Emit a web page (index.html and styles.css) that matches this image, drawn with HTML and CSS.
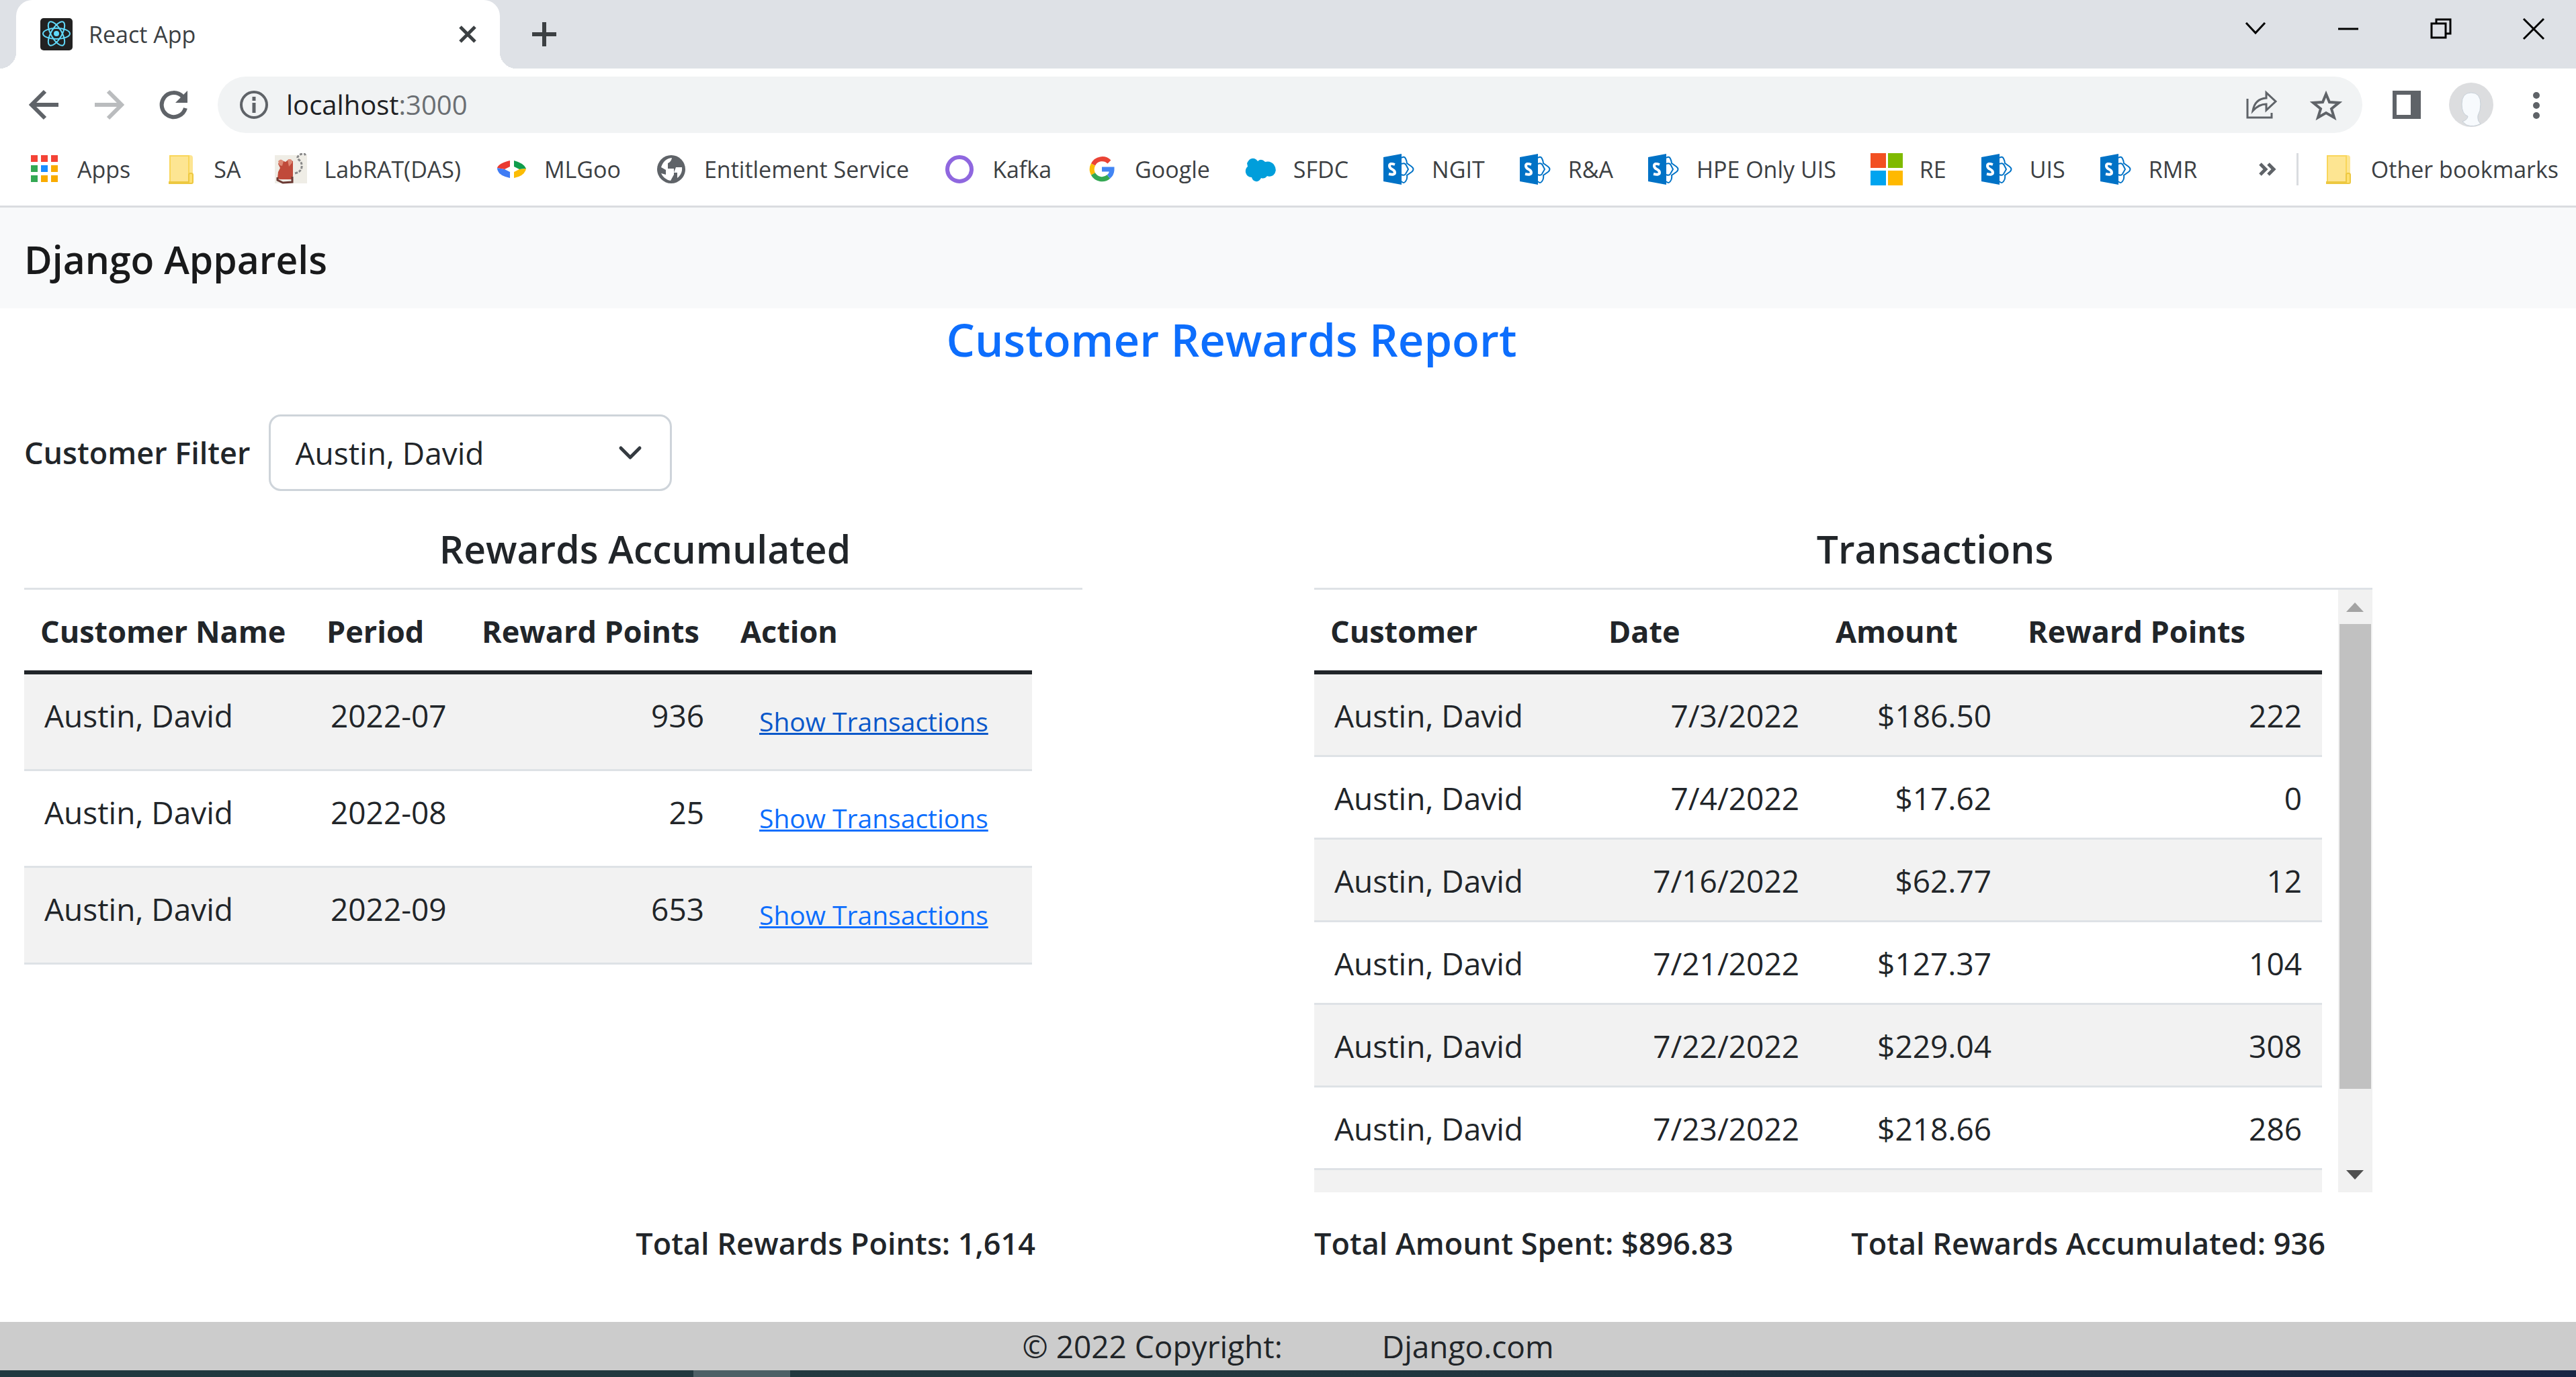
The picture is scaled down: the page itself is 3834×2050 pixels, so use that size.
FILE: index.html
```html
<!DOCTYPE html>
<html lang="en">
<head>
<meta charset="utf-8">
<title>React App</title>
<link rel="stylesheet" href="styles.css">
</head>
<body>
<svg class="defs" aria-hidden="true">
  <symbol id="folder" viewBox="0 0 48 48"><path d="M7 3h31q4 0 4 4v37H7z" fill="#fde592"/><path d="M8 4h28v39H8z" fill="#fde592" stroke="#f9d65a" stroke-width="2"/><path d="M36 43V32q0-2 3-2t3 2v11q0 2-2 2H7v-2z" fill="#ffe072" stroke="#edc840" stroke-width="2"/></symbol>
  <symbol id="sharepoint" viewBox="0 0 48 48"><path d="M28 7q4-3 6 1t2 7l7 5q5 4 0 8l-7 5q1 5-2 9t-6 0" fill="#fff" stroke="#0072c6" stroke-width="2"/><path d="M28 16q5-2 7 2l3 6-4 7q-2 3-6 1" fill="none" stroke="#0072c6" stroke-width="2"/><path d="M1 6l27-5v46L1 42z" fill="#0072c6"/><path d="M18 17q-8-3-8 2 0 3 4 5t4 5q0 4-9 2" fill="none" stroke="#fff" stroke-width="4"/></symbol>
</svg>
<div class="browser">
  <header class="chrome">
    <div class="tabstrip">
      <div class="tab">
        <svg class="icon" viewBox="0 0 48 48"><rect width="48" height="48" rx="5" fill="#222"/><g fill="none" stroke="#61dafb" stroke-width="2"><ellipse cx="24" cy="23" rx="20" ry="8"/><ellipse cx="24" cy="23" rx="20" ry="8" transform="rotate(60 24 23)"/><ellipse cx="24" cy="23" rx="20" ry="8" transform="rotate(120 24 23)"/></g><circle cx="24" cy="23" r="4" fill="#61dafb"/></svg>
        <span class="tab-title">React App</span>
        <button class="plain" aria-label="Close tab"><svg class="icon" viewBox="0 0 48 48"><path d="M13 13l22 22M35 13L13 35" stroke="#3c4043" stroke-width="5"/></svg></button>
      </div>
      <button class="plain newtab" aria-label="New tab"><svg class="icon" viewBox="0 0 48 48"><path d="M24 6v36M6 24h36" stroke="#3c4043" stroke-width="6"/></svg></button>
      <div class="window-buttons">
        <button class="plain" aria-label="Search tabs"><svg class="icon" viewBox="0 0 48 48"><path d="M10 16l14 15 14-15" fill="none" stroke="#000" stroke-width="3"/></svg></button>
        <button class="plain" aria-label="Minimize"><svg class="icon" viewBox="0 0 48 48"><path d="M9 25h30" stroke="#000" stroke-width="3"/></svg></button>
        <button class="plain" aria-label="Restore"><svg class="icon" viewBox="0 0 48 48"><path d="M10 17h21v21H10zM17 17v-6h21v21h-7" fill="none" stroke="#000" stroke-width="3"/></svg></button>
        <button class="plain" aria-label="Close"><svg class="icon" viewBox="0 0 48 48"><path d="M9 10l30 30M39 10L9 40" stroke="#000" stroke-width="3"/></svg></button>
      </div>
    </div>
    <div class="toolbar">
      <button class="plain" aria-label="Back"><svg class="icon" viewBox="0 0 48 48"><path d="M45 24H6M25 4L5 24l20 20" fill="none" stroke="#5f6368" stroke-width="6"/></svg></button>
      <button class="plain" aria-label="Forward"><svg class="icon" viewBox="0 0 48 48"><path d="M3 24h39M23 4l20 20-20 20" fill="none" stroke="#babcbe" stroke-width="6"/></svg></button>
      <button class="plain" aria-label="Reload"><svg class="icon" viewBox="0 0 48 48"><path d="M42 29a18 18 0 1 1-4-17" fill="none" stroke="#5f6368" stroke-width="6"/><path d="M45 3v18H27z" fill="#5f6368"/></svg></button>
      <div class="address">
        <svg class="icon" viewBox="0 0 48 48"><circle cx="24" cy="24" r="19" fill="none" stroke="#5f6368" stroke-width="4"/><path d="M24 21v15M24 12v6" stroke="#5f6368" stroke-width="5"/></svg>
        <span class="url">localhost<span class="port">:3000</span></span>
        <button class="plain" aria-label="Share"><svg class="icon" viewBox="0 0 48 48"><path d="M3 15v28h36v-7" fill="none" stroke="#5f6368" stroke-width="3"/><path d="M11 33q3-18 20-19V6l14 13-14 13v-9q-11 0-20 10z" fill="none" stroke="#5f6368" stroke-width="3"/></svg></button>
        <button class="plain" aria-label="Bookmark this tab"><svg class="icon" viewBox="0 0 48 48"><path d="M24 8l5 12 14 1-11 9 4 13-12-7-12 7 4-13-11-9 14-1z" fill="none" stroke="#5f6368" stroke-width="4"/></svg></button>
      </div>
      <button class="plain" aria-label="Side panel"><svg class="icon" viewBox="0 0 48 48"><path d="M3 3h42v42H3zM9 9v30h21V9z" fill="#5f6368" fill-rule="evenodd"/></svg></button>
      <button class="plain profile" aria-label="Profile"><svg class="avatar" viewBox="0 0 66 66"><circle cx="33" cy="33" r="33" fill="#dcdddf"/><path d="M26 63l-6-5q8-3 8-8-9-3-9-18 0-17 14-17t14 17q0 10-4 17-1 8 4 12-10 6-21 2z" fill="#f7fafd" stroke="#c7d0d8" stroke-width="1"/></svg></button>
      <button class="plain menu" aria-label="Menu"><svg class="icon" viewBox="0 0 48 48"><g fill="#5f6368"><circle cx="24" cy="10" r="5"/><circle cx="24" cy="25" r="5"/><circle cx="24" cy="40" r="5"/></g></svg></button>
    </div>
    <nav class="bookmarks">
      <a href="#"><svg class="icon" viewBox="0 0 48 48"><path d="M4 3h10v10H4zM19 3h10v10H19zM34 3h10v10H34z" fill="#f44336"/><path d="M4 18h10v10H4zM4 33h10v10H4z" fill="#34a853"/><path d="M19 18h10v10H19z" fill="#1a8cff"/><path d="M34 18h10v10H34zM19 33h10v10H19zM34 33h10v10H34z" fill="#f9ab00"/></svg>Apps</a>
      <a href="#"><svg class="icon"><use href="#folder"/></svg>SA</a>
      <a href="#"><svg class="icon" viewBox="0 0 48 48"><path d="M0 3h48v42H0z" fill="#efede6"/><path d="M8 10l8 3 5-4 6 3v22l-2 5H8l-4-1 1-10 3-6-3-6z" fill="#c04a3a"/><path d="M5 12q4-5 8 0l-2 7-4-1zM19 10q7-3 7 4l-5 6z" fill="#dd8a76"/><path d="M4 36v4l8 4 14-1V35" fill="none" stroke="#6b3a34" stroke-width="3"/><path d="M30 30q9-2 10-9t-4-11 2-8 8 3" fill="none" stroke="#888" stroke-width="3" stroke-dasharray="4 2"/></svg>LabRAT(DAS)</a>
      <a href="#"><svg class="icon" viewBox="0 0 48 48"><path d="M22 11v9l-8 4-11-2q2-7 19-11z" fill="#ea3a30"/><path d="M3 22l11 2 8 4v9Q3 33 3 22z" fill="#3f7cf4"/><path d="M28 11v9l8 4 10-1q-3-8-18-12z" fill="#0f9d4c"/><path d="M46 23l-10 1-8 4v9q16-3 18-14z" fill="#fbbc05"/></svg>MLGoo</a>
      <a href="#"><svg class="icon" viewBox="0 0 48 48"><circle cx="24" cy="24" r="21" fill="#5f6368"/><path d="M9 21q4-13 16-14-1 6-6 8v8h9v9l-5 9q-10-2-14-11l7 2v-7zM31 21h9q1 10-7 16v-8h-5z" fill="#fff"/></svg>Entitlement Service</a>
      <a href="#"><svg class="icon" viewBox="0 0 48 48"><circle cx="24" cy="24" r="18" fill="none" stroke="#8f67df" stroke-width="6"/></svg>Kafka</a>
      <a href="#"><svg class="icon" viewBox="0 0 48 48"><g fill="none" stroke-width="7"><path d="M35 13A15 15 0 0 0 11 17" stroke="#ea4335"/><path d="M11 17a15 15 0 0 0 0 14" stroke="#fbbc05"/><path d="M11 31a15 15 0 0 0 23 4" stroke="#34a853"/><path d="M34 35q5-4 5-11H24" stroke="#4285f4"/></g></svg>Google</a>
      <a href="#"><svg class="icon" viewBox="0 0 48 48"><path d="M4 15q4-9 11-7 3 1 5 4 5-5 11 1 8-2 13 4 6 9-1 16-5 3-9 1-4 5-9 3-3 6-8 5-5-1-6-6-7 0-9-7-1-6 3-9z" fill="#009edb"/></svg>SFDC</a>
      <a href="#"><svg class="icon"><use href="#sharepoint"/></svg>NGIT</a>
      <a href="#"><svg class="icon"><use href="#sharepoint"/></svg>R&amp;A</a>
      <a href="#"><svg class="icon"><use href="#sharepoint"/></svg>HPE Only UIS</a>
      <a href="#"><svg class="icon" viewBox="0 0 48 48"><path d="M0 0h23v22H0z" fill="#f25022"/><path d="M26 0h22v22H26z" fill="#7fba00"/><path d="M0 26h23v22H0z" fill="#00a4ef"/><path d="M26 26h22v22H26z" fill="#ffb900"/></svg>RE</a>
      <a href="#"><svg class="icon"><use href="#sharepoint"/></svg>UIS</a>
      <a href="#"><svg class="icon"><use href="#sharepoint"/></svg>RMR</a>
      <button class="plain more" aria-label="More bookmarks"><svg class="icon" viewBox="0 0 48 48"><path d="M13 16l8 8-8 8M25 16l8 8-8 8" fill="none" stroke="#5f6368" stroke-width="5"/></svg></button>
      <a class="other" href="#"><svg class="icon"><use href="#folder"/></svg>Other bookmarks</a>
    </nav>
  </header>

  <div class="navbar"><a class="brand" href="#">Django Apparels</a></div>
  <main>
    <h1>Customer Rewards Report</h1>
    <div class="filter">
      <label for="customer">Customer Filter</label>
      <div class="select-wrap">
        <select id="customer"><option>Austin, David</option></select>
        <svg class="icon" viewBox="0 0 48 48" aria-hidden="true"><path d="M10 17l14 14 14-14" fill="none" stroke="#343a40" stroke-width="5" stroke-linecap="round" stroke-linejoin="round"/></svg>
      </div>
    </div>
    <div class="reports">
      <section>
        <h2>Rewards Accumulated</h2>
        <div class="panel">
          <table class="rewards">
            <colgroup><col class="name"><col class="period"><col class="points"><col></colgroup>
            <thead><tr><th>Customer Name</th><th>Period</th><th>Reward Points</th><th>Action</th></tr></thead>
            <tbody>
              <tr><td>Austin, David</td><td>2022-07</td><td class="num">936</td><td><button class="link active">Show Transactions</button></td></tr>
              <tr><td>Austin, David</td><td>2022-08</td><td class="num">25</td><td><button class="link">Show Transactions</button></td></tr>
              <tr><td>Austin, David</td><td>2022-09</td><td class="num">653</td><td><button class="link">Show Transactions</button></td></tr>
            </tbody>
          </table>
        </div>
        <div class="totals end"><span>Total Rewards Points: 1,614</span></div>
      </section>
      <section>
        <h2>Transactions</h2>
        <div class="panel">
          <table class="transactions">
            <colgroup><col class="name"><col class="date"><col class="amount"><col></colgroup>
            <thead><tr><th>Customer</th><th>Date</th><th>Amount</th><th>Reward Points</th></tr></thead>
            <tbody>
              <tr><td>Austin, David</td><td class="num">7/3/2022</td><td class="num">$186.50</td><td class="num">222</td></tr>
              <tr><td>Austin, David</td><td class="num">7/4/2022</td><td class="num">$17.62</td><td class="num">0</td></tr>
              <tr><td>Austin, David</td><td class="num">7/16/2022</td><td class="num">$62.77</td><td class="num">12</td></tr>
              <tr><td>Austin, David</td><td class="num">7/21/2022</td><td class="num">$127.37</td><td class="num">104</td></tr>
              <tr><td>Austin, David</td><td class="num">7/22/2022</td><td class="num">$229.04</td><td class="num">308</td></tr>
              <tr><td>Austin, David</td><td class="num">7/23/2022</td><td class="num">$218.66</td><td class="num">286</td></tr>
              <tr><td></td><td></td><td></td><td></td></tr>
            </tbody>
          </table>
          <div class="scrollbar" aria-hidden="true">
            <svg viewBox="0 0 51 51"><path d="M12 33h26L25 19z" fill="#a3a3a3"/></svg>
            <div class="track"><div class="thumb"></div></div>
            <svg viewBox="0 0 51 51"><path d="M12 18h26L25 32z" fill="#505050"/></svg>
          </div>
        </div>
        <div class="totals"><span>Total Amount Spent: $896.83</span><span>Total Rewards Accumulated: 936</span></div>
      </section>
    </div>
  </main>
  <footer><span>© 2022 Copyright:</span><a href="#">Django.com</a></footer>
  <div class="taskbar"><div class="task"></div></div>
</div>
</body>
</html>
```
FILE: styles.css
```css
* { box-sizing: border-box; }
body { margin: 0; background: #fff; color: #212529; font: 46px/72px "Open Sans", sans-serif; }
a { color: inherit; text-decoration: none; }
.defs { position: absolute; width: 0; height: 0; }
.browser { display: flex; flex-direction: column; min-height: 100vh; overflow: hidden; }
.icon { display: block; flex: none; width: 48px; height: 48px; }
.avatar { display: block; width: 66px; height: 66px; }
.plain { display: block; flex: none; margin: 0; padding: 0; border: 0; background: none; }

/* Browser frame */
.chrome { border-bottom: 3px solid #dadce0; color: #3c4043; font-size: 34px; line-height: 48px; }
.tabstrip { display: flex; align-items: center; height: 102px; background: #dee1e6; }
.tab { position: relative; display: flex; align-items: center; width: 720px; height: 102px; margin-left: 24px; padding: 0 24px 0 36px; border-radius: 24px 24px 0 0; background: #fff; }
.tab::before, .tab::after { content: ""; position: absolute; bottom: 0; width: 24px; height: 24px; }
.tab::before { right: 100%; background: radial-gradient(circle at 0 0, #dee1e6 24px, #fff 24px); }
.tab::after { left: 100%; background: radial-gradient(circle at 100% 0, #dee1e6 24px, #fff 24px); }
.tab-title { flex: 1; padding-left: 24px; }
.newtab { margin-left: 42px; }
.window-buttons { display: flex; align-self: flex-start; gap: 90px; margin: 18px 39px 0 auto; }
.toolbar { display: flex; align-items: center; gap: 48px; height: 108px; padding: 0 35px 0 42px; }
.address { flex: 1; display: flex; align-items: center; gap: 48px; height: 84px; margin: 0 -6px; padding: 0 30px; border-radius: 42px; background: #f1f3f4; color: #202124; font-size: 40px; }
.url { flex: 1; margin-left: -24px; }
.port { color: #6b6f73; }
.profile { margin-left: -9px; }
.menu { margin-left: -8px; }
.bookmarks { display: flex; align-items: center; gap: 51px; height: 96px; padding: 0 26px 12px 42px; white-space: nowrap; }
.bookmarks a { display: flex; align-items: center; gap: 25px; }
.bookmarks .more { margin-left: auto; }
.bookmarks .other { margin-left: -32px; padding-left: 35px; border-left: 3px solid #dadce0; }

/* Page */
.navbar { padding: 41px 36px 37px; background: #f8f9fa; }
.brand { display: block; color: #191a1b; font-size: 57px; font-weight: 600; line-height: 72px; }
main { flex: 1; }
h1, h2 { margin: 0; font-weight: 600; text-align: center; }
h1 { padding-right: 168px; color: #0d6efd; font-size: 67px; line-height: 92px; }
.filter { display: flex; align-items: center; gap: 28px; padding: 66px 36px 0; }
.filter label { font-size: 45px; font-weight: 600; }
.select-wrap { position: relative; width: 600px; }
.select-wrap .icon { position: absolute; right: 38px; top: 33px; pointer-events: none; }
select { display: block; width: 100%; height: 114px; padding: 0 36px; border: 3px solid #ced4da; border-radius: 18px; appearance: none; background: #fff; color: #212529; font: inherit; }
.reports { display: grid; grid-template-columns: 1fr 1fr; margin-right: -6px; }
h2 { padding: 50px 0 22px; font-size: 57px; line-height: 72px; }
.panel { display: flex; justify-content: space-between; height: 900px; margin: 0 309px 0 36px; border-top: 3px solid #dee2e6; overflow: hidden; }
table { width: 1500px; height: max-content; table-layout: fixed; border-collapse: separate; border-spacing: 0; }
th { padding: 26px 24px 22px; border-bottom: 6px solid #212529; font-size: 45px; font-weight: 700; text-align: left; white-space: nowrap; }
td { height: 123px; padding: 25px 30px 23px; border-bottom: 3px solid #dee2e6; white-space: nowrap; vertical-align: top; }
tbody tr:nth-child(odd) { background: #f2f2f2; }
.num { text-align: right; }
.rewards td { height: 144px; }
.rewards .name { width: 426px; }
.rewards .period { width: 231px; }
.rewards .points { width: 385px; }
.transactions .name { width: 414px; }
.transactions .date { width: 338px; }
.transactions .amount { width: 286px; }
.link { display: block; margin: 0; padding: 15px 22px 0; border: 0; background: none; color: #0d6efd; font: 39px/60px "Open Sans", sans-serif; text-decoration: underline; }
.link.active { color: #0a58ca; }
.scrollbar { display: flex; flex-direction: column; width: 51px; background: #f1f1f1; }
.scrollbar svg { display: block; flex: none; height: 51px; }
.track { flex: 1; padding: 0 2px; }
.thumb { height: 87%; background: #c1c1c1; }
.totals { display: flex; justify-content: space-between; margin: 40px 379px 0 36px; font-size: 45px; font-weight: 600; }
.totals.end { justify-content: flex-end; }
footer { display: flex; justify-content: center; gap: 148px; background: #ccc; }
.taskbar { height: 10px; padding-left: 1032px; background: linear-gradient(90deg, #213940, #22393f 45%, #1f3040 75%, #1a2544); }
.task { width: 144px; height: 10px; background: #4d6066; }
```
